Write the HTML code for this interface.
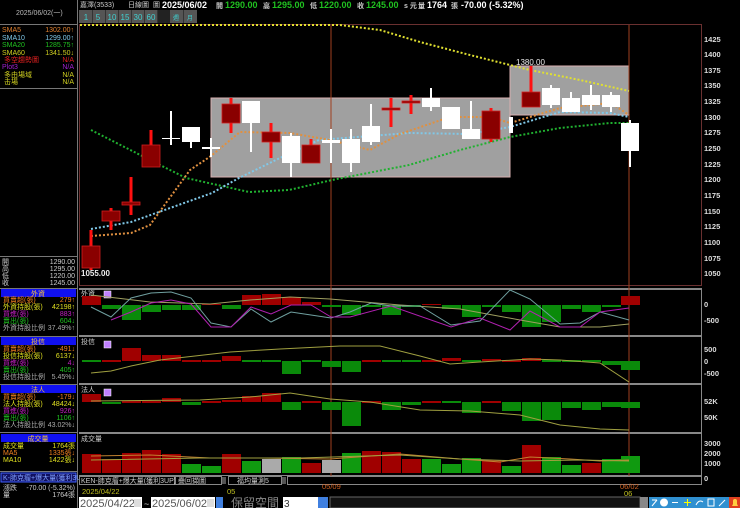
<!DOCTYPE html>
<html><head><meta charset="utf-8"><style>
html,body{margin:0;padding:0;background:#000;width:740px;height:508px;overflow:hidden}
svg{display:block}
text{font-family:"Liberation Sans","Noto Sans CJK TC",sans-serif}
.s{font-size:7px}
.m{font-size:8px;font-family:"Liberation Mono","Noto Sans CJK TC",monospace}
</style></head><body>
<svg width="740" height="508" viewBox="0 0 740 508" xmlns="http://www.w3.org/2000/svg">
<rect width="740" height="508" fill="#000"/>
<!-- left panel borders -->
<line x1="77.5" y1="0" x2="77.5" y2="508" stroke="#777" stroke-width="1"/>
<line x1="0" y1="24.5" x2="77" y2="24.5" stroke="#777"/>
<text x="16" y="15" class="s" fill="#bbb">2025/06/02(一)</text>
<g class="s">
<text x="2" y="32" fill="#e08030">SMA5</text><text x="74" y="32" fill="#e08030" text-anchor="end">1302.00↑</text>
<text x="2" y="40" fill="#80c8e8">SMA10</text><text x="74" y="40" fill="#80c8e8" text-anchor="end">1299.00↑</text>
<text x="2" y="47" fill="#20c020">SMA20</text><text x="74" y="47" fill="#20c020" text-anchor="end">1285.75↑</text>
<text x="2" y="55" fill="#d0d020">SMA60</text><text x="74" y="55" fill="#d0d020" text-anchor="end">1341.50↓</text>
<text x="4" y="62" fill="#e02020">多空趨勢圖</text><text x="74" y="62" fill="#e02020" text-anchor="end">N/A</text>
<text x="2" y="69" fill="#a020d0">Plot3</text><text x="74" y="69" fill="#a020d0" text-anchor="end">N/A</text>
<text x="4" y="77" fill="#d0d020">多由場域</text><text x="74" y="77" fill="#d0d020" text-anchor="end">N/A</text>
<text x="4" y="84" fill="#d0d020">击場</text><text x="74" y="84" fill="#d0d020" text-anchor="end">N/A</text>
</g>
<line x1="0" y1="88.5" x2="77" y2="88.5" stroke="#777"/>
<line x1="0" y1="256.5" x2="77" y2="256.5" stroke="#777"/>
<g class="s" fill="#ccc">
<text x="2" y="264">開</text><text x="75" y="264" text-anchor="end">1290.00</text>
<text x="2" y="271">高</text><text x="75" y="271" text-anchor="end">1295.00</text>
<text x="2" y="278">低</text><text x="75" y="278" text-anchor="end">1220.00</text>
<text x="2" y="285">收</text><text x="75" y="285" text-anchor="end">1245.00</text>
</g>
<!-- blue headers -->
<g class="s">
<rect x="1" y="289" width="75" height="8" fill="#1010f0"/><text x="38" y="296" fill="#f0c040" text-anchor="middle">外資</text>
<text x="3" y="302" fill="#f08020">買賣超(張)</text><text x="75" y="302" fill="#f08020" text-anchor="end">279↑</text>
<text x="3" y="309" fill="#e0e020">外資持股(張)</text><text x="75" y="309" fill="#e0e020" text-anchor="end">42198↑</text>
<text x="3" y="316" fill="#c020c0">買進(張)</text><text x="75" y="316" fill="#c020c0" text-anchor="end">883↑</text>
<text x="3" y="323" fill="#20c020">賣出(張)</text><text x="75" y="323" fill="#20c020" text-anchor="end">604↓</text>
<text x="3" y="330" fill="#aaa">外資持股比例</text><text x="75" y="330" fill="#aaa" text-anchor="end">37.49%↑</text>

<rect x="1" y="337" width="75" height="8" fill="#1010f0"/><text x="38" y="344" fill="#f0c040" text-anchor="middle">投信</text>
<text x="3" y="351" fill="#f08020">買賣超(張)</text><text x="75" y="351" fill="#f08020" text-anchor="end">-491↓</text>
<text x="3" y="358" fill="#e0e020">投信持股(張)</text><text x="75" y="358" fill="#e0e020" text-anchor="end">6137↓</text>
<text x="3" y="365" fill="#c020c0">買進(張)</text><text x="75" y="365" fill="#c020c0" text-anchor="end">4↓</text>
<text x="3" y="372" fill="#20c020">賣出(張)</text><text x="75" y="372" fill="#20c020" text-anchor="end">405↑</text>
<text x="3" y="379" fill="#aaa">投信持股比例</text><text x="75" y="379" fill="#aaa" text-anchor="end">5.45%↓</text>

<rect x="1" y="385" width="75" height="8" fill="#1010f0"/><text x="38" y="392" fill="#f0c040" text-anchor="middle">法人</text>
<text x="3" y="399" fill="#f08020">買賣超(張)</text><text x="75" y="399" fill="#f08020" text-anchor="end">-179↓</text>
<text x="3" y="406" fill="#e0e020">法人持股(張)</text><text x="75" y="406" fill="#e0e020" text-anchor="end">48424↓</text>
<text x="3" y="413" fill="#c020c0">買進(張)</text><text x="75" y="413" fill="#c020c0" text-anchor="end">926↑</text>
<text x="3" y="420" fill="#20c020">賣出(張)</text><text x="75" y="420" fill="#20c020" text-anchor="end">1106↑</text>
<text x="3" y="427" fill="#aaa">法人持股比例</text><text x="75" y="427" fill="#aaa" text-anchor="end">43.02%↓</text>

<rect x="1" y="434" width="75" height="8" fill="#1010f0"/><text x="38" y="441" fill="#f0c040" text-anchor="middle">成交量</text>
<text x="3" y="448" fill="#e0e020">成交量</text><text x="75" y="448" fill="#e0e020" text-anchor="end">1764張</text>
<text x="3" y="455" fill="#f08020">MA5</text><text x="75" y="455" fill="#f08020" text-anchor="end">1335張↓</text>
<text x="3" y="462" fill="#e0e020">MA10</text><text x="75" y="462" fill="#e0e020" text-anchor="end">1422張↓</text>

<rect x="1" y="473" width="75" height="9" fill="#101060" stroke="#4060ff"/><text x="3" y="480" fill="#80a0ff">K-肺克瘤+爆大量(獲利3U</text>
<text x="3" y="490" fill="#ccc">漲跌</text><text x="75" y="490" fill="#ccc" text-anchor="end">-70.00 (-5.32%)</text>
<text x="3" y="497" fill="#ccc">量</text><text x="75" y="497" fill="#ccc" text-anchor="end">1764張</text>
</g>
<line x1="0" y1="288.5" x2="77" y2="288.5" stroke="#777"/>
<line x1="0" y1="336.5" x2="77" y2="336.5" stroke="#777"/>
<line x1="0" y1="384.5" x2="77" y2="384.5" stroke="#777"/>
<line x1="0" y1="432.5" x2="77" y2="432.5" stroke="#777"/>
<line x1="0" y1="471.5" x2="77" y2="471.5" stroke="#777"/>

<!-- header -->
<g class="s" fill="#ccc"><text x="80" y="7">嘉澤(3533)</text><text x="128" y="7">日線圖</text><text x="153" y="7">圖</text></g>
<text x="162" y="8" font-size="9" font-weight="bold" fill="#fff">2025/06/02</text>
<g font-size="9" font-weight="bold">
<text x="216" y="8" fill="#ccc" font-size="7">開</text><text x="225" y="8" fill="#20c020">1290.00</text>
<text x="263" y="8" fill="#ccc" font-size="7">高</text><text x="272" y="8" fill="#20c020">1295.00</text>
<text x="310" y="8" fill="#ccc" font-size="7">低</text><text x="319" y="8" fill="#20c020">1220.00</text>
<text x="357" y="8" fill="#ccc" font-size="7">收</text><text x="366" y="8" fill="#20c020">1245.00</text>
<text x="404" y="8" fill="#ccc" font-size="7">s 元</text>
<text x="418" y="8" fill="#ccc" font-size="7">量</text><text x="427" y="8" fill="#fff">1764</text>
<text x="451" y="8" fill="#ccc" font-size="7">張</text><text x="461" y="8" fill="#fff">-70.00 (-5.32%)</text>
</g>
<!-- timeframe buttons -->
<rect x="79" y="10" width="118" height="13" fill="#555"/>
<g font-size="8" fill="#40d0d0" text-anchor="middle">
<text x="86" y="20">1</text><text x="98" y="20">5</text><text x="112" y="20">10</text><text x="125" y="20">15</text><text x="138" y="20">30</text><text x="151" y="20">60</text>
<rect x="157" y="10" width="13" height="13" fill="#222"/><text x="170" y="20" dx="6" font-size="6">週</text><text x="190" y="20" font-size="6">月</text>
</g>
<g stroke="#333"><line x1="92.5" y1="10" x2="92.5" y2="23"/><line x1="105.5" y1="10" x2="105.5" y2="23"/><line x1="118.5" y1="10" x2="118.5" y2="23"/><line x1="131.5" y1="10" x2="131.5" y2="23"/><line x1="144.5" y1="10" x2="144.5" y2="23"/><line x1="157.5" y1="10" x2="157.5" y2="23"/><line x1="183.5" y1="10" x2="183.5" y2="23"/></g>

<!-- main chart frame -->
<rect x="79.5" y="24.5" width="622" height="261" fill="none" stroke="#6a3030"/>
<!-- panel separators -->
<g stroke="#888" stroke-width="2">
<line x1="79" y1="289" x2="702" y2="289"/><line x1="79" y1="336" x2="702" y2="336"/><line x1="79" y1="384" x2="702" y2="384"/><line x1="79" y1="433" x2="702" y2="433"/><line x1="79" y1="476" x2="702" y2="476"/>
</g>
<line x1="701.5" y1="289" x2="701.5" y2="476" stroke="#888"/>
<!-- gray boxes -->
<rect x="211" y="98" width="299" height="79" fill="#a0a0a0" stroke="#d8b0b0"/>
<rect x="510" y="66" width="119" height="49" fill="#a0a0a0" stroke="#d8b0b0"/>
<!-- vertical lines -->
<line x1="331" y1="25" x2="331" y2="485" stroke="#a04020" stroke-width="1"/>
<line x1="629" y1="25" x2="629" y2="485" stroke="#a04020" stroke-width="1"/>

<!-- MAs -->
<g fill="none" stroke-width="2" stroke-dasharray="2 2">
<polyline stroke="#e0e030" points="80,25 340,25 380,30 420,42 470,55 530,70 580,80 629,91"/>
<polyline stroke="#20b030" points="91,130 150,160 186,178 249,192 289,190 332,180 409,165 460,150 510,137 560,128 610,123 629,123"/>
<polyline stroke="#80c8e8" points="91,229 131,222 212,193 239,178 282,157 319,140 370,136 409,133 470,134 510,127 560,112 610,113 629,117"/>
<polyline stroke="#e09040" points="91,236 131,233 150,225 190,170 211,156 240,132 290,133 330,140 370,150 400,134 450,117 490,117 510,123 560,108 611,103 629,115"/>
</g>

<!-- candles -->
<g id="candles">
<!-- red: wick then body -->
<g fill="#ff1010">
<rect x="89.5" y="230" width="3" height="40"/><rect x="109.5" y="208" width="3" height="22"/><rect x="129.5" y="177" width="3" height="38"/><rect x="149.5" y="130" width="3" height="37"/>
<rect x="229.5" y="98" width="3" height="35"/><rect x="269.5" y="123" width="3" height="35"/><rect x="309.5" y="139" width="3" height="24"/>
<rect x="389.5" y="98" width="3" height="29"/><rect x="409.5" y="95" width="3" height="19"/><rect x="489.5" y="108" width="3" height="34"/><rect x="529.5" y="66" width="3" height="41"/>
</g>
<g fill="#8a0000" stroke="#d02020" stroke-width="0.8">
<rect x="82" y="246" width="18" height="22"/><rect x="102" y="211" width="18" height="10"/><rect x="122" y="202" width="18" height="3"/><rect x="142" y="145" width="18" height="22"/>
<rect x="222" y="104" width="18" height="19"/><rect x="262" y="132" width="18" height="10"/><rect x="302" y="145" width="18" height="18"/>
<rect x="382" y="108" width="18" height="2"/><rect x="402" y="101" width="18" height="2"/><rect x="482" y="111" width="18" height="28"/><rect x="522" y="92" width="18" height="15"/>
</g>
<!-- white -->
<g fill="#fff">
<rect x="170" y="111" width="2" height="34"/><rect x="162" y="138" width="18" height="1"/>
<rect x="190" y="127" width="2" height="21"/><rect x="182" y="127" width="18" height="15"/>
<rect x="210" y="138" width="2" height="19"/><rect x="202" y="147" width="18" height="2"/>
<rect x="250" y="101" width="2" height="51"/><rect x="242" y="101" width="18" height="22"/>
<rect x="290" y="133" width="2" height="44"/><rect x="282" y="136" width="18" height="27"/>
<rect x="330" y="129" width="2" height="34"/><rect x="322" y="140" width="18" height="3"/>
<rect x="350" y="129" width="2" height="43"/><rect x="342" y="139" width="18" height="24"/>
<rect x="370" y="104" width="2" height="41"/><rect x="362" y="126" width="18" height="16"/>
<rect x="430" y="88" width="2" height="23"/><rect x="422" y="98" width="18" height="9"/>
<rect x="442" y="107" width="18" height="22"/>
<rect x="470" y="101" width="2" height="38"/><rect x="462" y="129" width="18" height="10"/>
<rect x="509" y="117" width="4" height="16"/>
<rect x="550" y="85" width="2" height="23"/><rect x="542" y="88" width="18" height="17"/>
<rect x="570" y="92" width="2" height="20"/><rect x="562" y="98" width="18" height="14"/>
<rect x="590" y="85" width="2" height="25"/><rect x="582" y="95" width="18" height="10"/>
<rect x="610" y="92" width="2" height="20"/><rect x="602" y="95" width="18" height="12"/>
<rect x="629" y="120" width="2" height="47"/><rect x="621" y="123" width="18" height="28"/>
</g>
</g>
<text x="81" y="276" font-size="8" font-weight="bold" fill="#eee">1055.00</text>
<text x="516" y="65" font-size="8" fill="#eee">1380.00</text>

<!-- price axis -->
<g font-size="7.5" font-weight="bold" fill="#ddd">
<text x="704" y="42">1425</text><text x="704" y="57">1400</text><text x="704" y="73">1375</text><text x="704" y="88">1350</text><text x="704" y="104">1325</text><text x="704" y="120">1300</text><text x="704" y="135">1275</text><text x="704" y="151">1250</text><text x="704" y="167">1225</text><text x="704" y="182">1200</text><text x="704" y="198">1175</text><text x="704" y="214">1150</text><text x="704" y="229">1125</text><text x="704" y="245">1100</text><text x="704" y="261">1075</text><text x="704" y="276">1050</text>
<text x="704" y="307">0</text><text x="704" y="323">-500</text>
<text x="704" y="352">500</text><text x="704" y="364">0</text><text x="704" y="376">-500</text>
<text x="704" y="404">52K</text><text x="704" y="420">50K</text>
<text x="704" y="446">3000</text><text x="704" y="456">2000</text><text x="704" y="466">1000</text><text x="704" y="481">0</text>
</g>

<!-- sub-panel labels -->
<g class="s" fill="#ccc"><text x="81" y="296">外資</text><text x="81" y="344">投信</text><text x="81" y="392">法人</text><text x="81" y="441">成交量</text></g>
<g fill="#c080ff" stroke="#fff" stroke-width="0.5"><rect x="104" y="291" width="7" height="7"/><rect x="104" y="341" width="7" height="7"/><rect x="104" y="389" width="7" height="7"/></g>

<!-- foreign bars zero 305 -->
<g fill="#0a8a0a">
<rect x="102" y="305" width="19" height="4"/><rect x="122" y="305" width="19" height="15"/><rect x="142" y="305" width="19" height="7"/><rect x="162" y="305" width="19" height="5"/><rect x="182" y="305" width="19" height="5"/><rect x="222" y="305" width="19" height="4"/>
<rect x="322" y="305" width="19" height="2"/><rect x="342" y="305" width="19" height="10"/><rect x="362" y="305" width="19" height="2"/><rect x="382" y="305" width="19" height="10"/><rect x="402" y="305" width="19" height="2"/>
<rect x="442" y="305" width="19" height="4"/><rect x="462" y="305" width="19" height="12"/><rect x="482" y="305" width="19" height="2"/><rect x="502" y="305" width="19" height="7"/><rect x="522" y="305" width="19" height="22"/><rect x="542" y="305" width="19" height="17"/><rect x="562" y="305" width="19" height="4"/><rect x="582" y="305" width="19" height="7"/><rect x="602" y="305" width="19" height="2"/>
</g>
<g fill="#a00000">
<rect x="82" y="296" width="19" height="9"/><rect x="202" y="304" width="19" height="1"/><rect x="242" y="295" width="19" height="10"/><rect x="262" y="294" width="19" height="11"/><rect x="282" y="297" width="19" height="8"/><rect x="302" y="302" width="19" height="3"/><rect x="422" y="304" width="19" height="1"/><rect x="621" y="296" width="19" height="9"/>
</g>
<g fill="none" stroke-width="1">
<polyline stroke="#a0a060" points="91,295 150,302 210,304 250,300 290,297 330,299 400,305 460,309 520,320 560,327 600,327 629,324"/>
<polyline stroke="#70a0a0" points="91,307 111,317 131,298 151,293 171,292 191,298 211,323 231,327 251,309 271,322 291,312 311,315 331,318 350,312 371,303 391,306 420,306 451,325 480,321 510,290 530,299 560,324 580,323 600,312 629,320"/>
<polyline stroke="#b020b0" points="111,320 131,312 151,303 171,300 191,304 211,327 231,327 251,307 271,314 291,305 311,305 331,317 350,317 391,306 451,327 480,318 510,330 530,311 560,327 580,327 600,312 629,308"/>
</g>
<!-- 投信 zero 361 -->
<g fill="#0a8a0a">
<rect x="82" y="360" width="19" height="2"/><rect x="242" y="360" width="19" height="2"/><rect x="262" y="360" width="19" height="2"/><rect x="282" y="361" width="19" height="13"/><rect x="302" y="360" width="19" height="2"/><rect x="322" y="361" width="19" height="6"/><rect x="342" y="361" width="19" height="11"/><rect x="382" y="360" width="19" height="2"/><rect x="402" y="360" width="19" height="2"/><rect x="462" y="360" width="19" height="2"/><rect x="542" y="360" width="19" height="2"/><rect x="562" y="360" width="19" height="2"/><rect x="582" y="360" width="19" height="2"/><rect x="602" y="361" width="19" height="4"/><rect x="621" y="361" width="19" height="9"/>
</g>
<g fill="#a00000">
<rect x="102" y="360" width="19" height="2"/><rect x="122" y="348" width="19" height="13"/><rect x="142" y="355" width="19" height="6"/><rect x="162" y="355" width="19" height="6"/><rect x="182" y="360" width="19" height="2"/><rect x="202" y="360" width="19" height="2"/><rect x="222" y="356" width="19" height="5"/><rect x="362" y="360" width="19" height="2"/><rect x="422" y="360" width="19" height="2"/><rect x="442" y="358" width="19" height="3"/><rect x="482" y="359" width="19" height="2"/><rect x="502" y="360" width="19" height="2"/><rect x="522" y="358" width="19" height="3"/>
</g>
<polyline fill="none" stroke="#a0a040" points="91,373 111,371 131,366 160,360 230,352 280,349 340,346 380,346 420,356 450,364 480,362 530,359 560,360 600,363 629,382"/>
<!-- 法人 zero 402 -->
<g fill="#0a8a0a">
<rect x="102" y="402" width="19" height="2"/><rect x="182" y="402" width="19" height="3"/><rect x="282" y="402" width="19" height="8"/><rect x="322" y="402" width="19" height="8"/><rect x="342" y="402" width="19" height="24"/><rect x="382" y="402" width="19" height="8"/><rect x="402" y="402" width="19" height="3"/><rect x="442" y="401" width="19" height="2"/><rect x="462" y="402" width="19" height="11"/><rect x="502" y="402" width="19" height="9"/><rect x="522" y="402" width="19" height="19"/><rect x="542" y="402" width="19" height="18"/><rect x="562" y="402" width="19" height="6"/><rect x="582" y="402" width="19" height="8"/><rect x="602" y="402" width="19" height="5"/><rect x="621" y="402" width="19" height="6"/>
</g>
<g fill="#a00000">
<rect x="82" y="394" width="19" height="8"/><rect x="122" y="401" width="19" height="2"/><rect x="142" y="401" width="19" height="2"/><rect x="162" y="398" width="19" height="4"/><rect x="202" y="401" width="19" height="2"/><rect x="222" y="400" width="19" height="2"/><rect x="242" y="396" width="19" height="6"/><rect x="262" y="393" width="19" height="9"/><rect x="302" y="401" width="19" height="2"/><rect x="362" y="401" width="19" height="2"/><rect x="422" y="401" width="19" height="2"/><rect x="482" y="401" width="19" height="2"/>
</g>
<polyline fill="none" stroke="#a0a040" points="91,401 200,400 250,397 290,393 330,399 370,402 420,410 470,411 520,415 560,425 600,429 629,430"/>
<!-- volume baseline 473 -->
<g>
<rect x="82" y="454" width="19" height="19" fill="#a00000"/><rect x="102" y="459" width="19" height="14" fill="#a00000"/><rect x="122" y="453" width="19" height="20" fill="#a00000"/><rect x="142" y="450" width="19" height="23" fill="#a00000"/><rect x="162" y="454" width="19" height="19" fill="#a00000"/><rect x="182" y="464" width="19" height="9" fill="#109a10"/>
<rect x="202" y="466" width="19" height="7" fill="#109a10"/><rect x="222" y="454" width="19" height="19" fill="#a00000"/><rect x="242" y="461" width="19" height="12" fill="#109a10"/><rect x="262" y="459" width="19" height="14" fill="#aaa"/><rect x="282" y="457" width="19" height="16" fill="#109a10"/><rect x="302" y="463" width="19" height="10" fill="#a00000"/><rect x="322" y="460" width="19" height="13" fill="#aaa"/><rect x="342" y="453" width="19" height="20" fill="#109a10"/><rect x="362" y="451" width="19" height="22" fill="#a00000"/><rect x="382" y="452" width="19" height="21" fill="#a00000"/><rect x="402" y="459" width="19" height="14" fill="#a00000"/><rect x="422" y="459" width="19" height="14" fill="#109a10"/><rect x="442" y="464" width="19" height="9" fill="#109a10"/><rect x="462" y="458" width="19" height="15" fill="#109a10"/><rect x="482" y="460" width="19" height="13" fill="#a00000"/><rect x="502" y="466" width="19" height="7" fill="#109a10"/><rect x="522" y="445" width="19" height="28" fill="#a00000"/><rect x="542" y="457" width="19" height="16" fill="#109a10"/><rect x="562" y="465" width="19" height="8" fill="#109a10"/><rect x="582" y="463" width="19" height="10" fill="#a00000"/><rect x="602" y="459" width="19" height="14" fill="#109a10"/><rect x="621" y="456" width="19" height="17" fill="#109a10"/>
</g>
<polyline fill="none" stroke="#c08030" points="91,456 150,455 210,458 260,458 330,459 400,454 460,459 500,462 530,457 570,459 600,461 629,460"/>
<polyline fill="none" stroke="#a0a040" points="91,460 200,458 300,458 400,455 460,459 520,461 580,460 629,461"/>

<!-- bottom indicator row -->
<rect x="79" y="476" width="623" height="9" fill="#000"/>
<rect x="79.5" y="476.5" width="95" height="8" fill="none" stroke="#888"/>
<text x="81" y="483" class="s" fill="#ccc">KEN-肺克瘤+爆大量(獲利3UP)</text>
<rect x="175.5" y="476.5" width="46" height="8" fill="none" stroke="#888"/><text x="178" y="483" class="s" fill="#ccc">疊回擷圖</text>
<rect x="222" y="477" width="4" height="7" fill="#555"/>
<rect x="228.5" y="476.5" width="53" height="8" fill="none" stroke="#888"/><text x="237" y="483" class="s" fill="#ccc">福均量測5</text>
<rect x="282" y="477" width="4" height="7" fill="#555"/>
<rect x="287.5" y="476.5" width="414" height="8" fill="none" stroke="#888"/>
<!-- dates -->
<g font-size="7.5">
<text x="82" y="494" fill="#c0c020">2025/04/22</text>
<text x="227" y="494" fill="#c0c020">05</text>
<text x="322" y="489" fill="#d06020">05/09</text>
<text x="620" y="489" fill="#d06020">06/02</text>
<text x="624" y="496" fill="#c0c020">06</text>
</g>
<!-- bottom controls -->
<rect x="79" y="497" width="63" height="11" fill="#fff"/><text x="80" y="507" font-size="11" fill="#555">2025/04/22</text><rect x="134" y="499" width="7" height="8" fill="#ddd"/>
<text x="144" y="507" font-size="9" fill="#ccc">~</text>
<rect x="151" y="497" width="64" height="11" fill="#fff"/><text x="152" y="507" font-size="11" fill="#555">2025/06/02</text><rect x="207" y="499" width="7" height="8" fill="#ddd"/>
<rect x="216" y="497" width="7" height="11" fill="#4080e0"/>
<text x="231" y="507" font-size="12" fill="#888">保留空間</text>
<rect x="283" y="497" width="35" height="11" fill="#fff"/><text x="284" y="507" font-size="10" fill="#333">3</text>
<rect x="318" y="497" width="10" height="11" fill="#4080e0"/>
<rect x="330" y="497" width="310" height="11" fill="#111" stroke="#666"/>
<rect x="640" y="497" width="8" height="11" fill="#888"/>
<rect x="649" y="497" width="80" height="11" fill="#3090d0"/>
<g stroke="#fff" stroke-width="1" fill="none">
<path d="M652 506 L657 500 M652 500 L657 500"/><circle cx="664" cy="502.5" r="3.5" fill="#fff"/><path d="M672 502.5h6"/><path d="M684 502.5h7M687.5 499v7" stroke="#ff0"/><path d="M696 505 q3-6 7-3"/><path d="M708 499h6v7h-6z"/><path d="M719 506l6-6"/>
</g>
<rect x="729" y="497" width="11" height="11" fill="#e04020"/><path d="M732 506h6l-1-2v-3a2 2 0 0 0-4 0v3z" fill="#ffd040"/>
</svg>
</body></html>
